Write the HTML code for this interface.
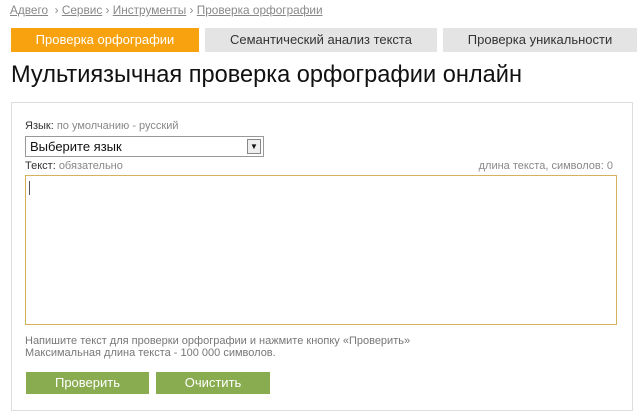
<!DOCTYPE html>
<html><head><meta charset="utf-8"><style>
*{margin:0;padding:0;box-sizing:border-box}
body{width:637px;height:416px;background:#fff;font-family:"Liberation Sans","DejaVu Sans",sans-serif;position:relative;overflow:hidden;color:#333}
.a{position:absolute;white-space:nowrap}
.bc{top:3px;left:10px;font-size:11.8px;color:#888}
.bc u{color:#888}
.tab{position:absolute;top:28px;height:24px;line-height:24px;text-align:center;font-size:13px;color:#333;background:#e4e4e4}
h1{position:absolute;left:11px;top:62px;font-size:23.6px;font-weight:normal;color:#111;white-space:nowrap}
.panel{position:absolute;left:11px;top:102px;width:622px;height:309px;border:1px solid #ddd}
.lbl{font-size:11px;color:#333}
.lbl span{color:#888}
.btn{position:absolute;top:372px;height:22px;line-height:22px;background:#8aac50;color:#fff;text-align:center;font-size:13px}
</style></head><body>
<div class="a bc"><u>Адвего</u> &nbsp;› <u>Сервис</u> › <u>Инструменты</u> › <u>Проверка орфографии</u></div>
<div class="tab" style="left:11px;width:188px;background:#f7a20e;color:#fff">Проверка орфографии</div>
<div class="tab" style="left:205px;width:232px">Семантический анализ текста</div>
<div class="tab" style="left:443px;width:194px">Проверка уникальности</div>
<h1>Мультиязычная проверка орфографии онлайн</h1>
<div class="panel"></div>
<div class="a lbl" style="left:25px;top:120px">Язык: <span>по умолчанию - русский</span></div>
<div class="a" style="left:25px;top:136px;width:239px;height:21px;border:1px solid #999;font-size:13px;line-height:19px;padding-left:4px;color:#111">Выберите язык
<div style="position:absolute;right:2px;top:2px;width:14px;height:15px;border:1px solid #888;background:#eee;font-size:8px;line-height:13px;text-align:center">▼</div></div>
<div class="a lbl" style="left:25px;top:160px">Текст: <span>обязательно</span></div>
<div class="a lbl" style="right:24px;top:160px;color:#888">длина текста, символов: 0</div>
<div class="a" style="left:25px;top:175px;width:592px;height:150px;border:1px solid #d4b15a"><div style="position:absolute;left:3px;top:5px;width:1px;height:14px;background:#555"></div></div>
<div class="a" style="left:25px;top:335px;font-size:11px;color:#777;line-height:12px">Напишите текст для проверки орфографии и нажмите кнопку «Проверить»<br>Максимальная длина текста - 100 000 символов.</div>
<div class="btn" style="left:26px;width:123px">Проверить</div>
<div class="btn" style="left:156px;width:114px">Очистить</div>
</body></html>
